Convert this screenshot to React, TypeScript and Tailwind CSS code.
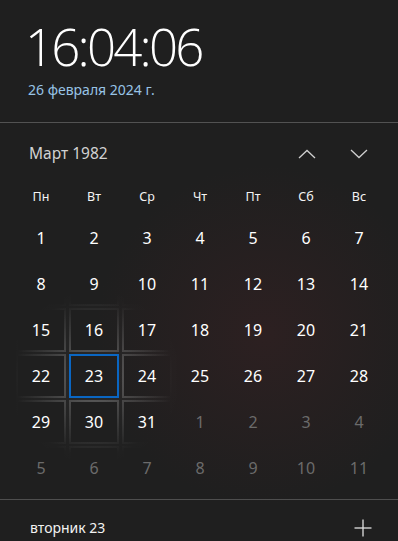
import React from "react";

const PANEL_BG =
  "bg-fixed bg-[radial-gradient(circle_at_265px_335px,rgba(58,33,35,0.5),rgba(31,31,31,0)_170px),linear-gradient(#1f1f1f,#1f1f1f)]";

const weekdays = ["Пн", "Вт", "Ср", "Чт", "Пт", "Сб", "Вс"];

type Day = { n: number; cur: boolean };

function buildDays(): Day[] {
  const d: Day[] = [];
  for (let i = 1; i <= 31; i++) d.push({ n: i, cur: true });
  for (let i = 1; i <= 11; i++) d.push({ n: i, cur: false });
  return d;
}

export default function App() {
  const days = buildDays();
  return (
    <div
      className={`w-[398px] h-[541px] overflow-hidden text-white font-['Noto_Sans',sans-serif] ${PANEL_BG}`}
    >
      {/* header */}
      <div className="h-[122px] pl-[25px] pt-[24px]">
        <div className="font-['Open_Sans',sans-serif] font-light text-[51px] leading-[44px] tracking-[-2.8px] text-white">
          16:04:06
        </div>
        <div className="mt-[12px] pl-[3px] text-[14px] leading-[20px] text-[#98c4e6]">
          26 февраля 2024 г.
        </div>
      </div>
      <div className="h-px bg-[#525252]" />

      {/* month header */}
      <div className="h-[62px] flex items-center pl-[29px] pr-[30px]">
        <div className="text-[15.5px] text-[#d2d2d2] flex-1">Март 1982</div>
        <svg width="18" height="10" viewBox="0 0 18 10" className="mr-[34px]">
          <polyline
            points="1,9 9,1.5 17,9"
            fill="none"
            stroke="#cfcfcf"
            strokeWidth="1.3"
          />
        </svg>
        <svg width="18" height="10" viewBox="0 0 18 10">
          <polyline
            points="1,1 9,8.5 17,1"
            fill="none"
            stroke="#cfcfcf"
            strokeWidth="1.3"
          />
        </svg>
      </div>

      {/* weekdays */}
      <div className="grid grid-cols-[repeat(7,50px)] gap-x-[3px] ml-[16px] h-[24px] items-center">
        {weekdays.map((w) => (
          <div key={w} className="text-center text-[12.5px] text-[#f4f4f4]">
            {w}
          </div>
        ))}
      </div>

      {/* days */}
      <div className="mt-[7px] ml-[16px] w-[368px] grid grid-cols-[repeat(7,50px)] grid-rows-[repeat(6,44px)] gap-x-[3px] gap-y-[2px] bg-[radial-gradient(circle_at_78px_161px,rgba(255,255,255,0.045),rgba(255,255,255,0)_90px)]">
        {days.map((d, i) => {
          const hovered = d.cur && d.n === 23;
          const outer = hovered
            ? "bg-[#0a66c2]"
            : "bg-fixed bg-[radial-gradient(circle_at_94px_377px,rgba(255,255,255,0.3),rgba(255,255,255,0.13)_45px,rgba(255,255,255,0)_80px)]";
          return (
            <div key={i} className={`p-[2px] ${outer}`}>
              <div
                className={`h-full flex items-center justify-center text-[16px] ${PANEL_BG} ${
                  d.cur ? "text-white" : "text-[#6b6b6b]"
                }`}
              >
                {d.n}
              </div>
            </div>
          );
        })}
      </div>

      <div className="mt-[9px] h-px bg-[#4e4e4e]" />

      {/* footer */}
      <div className="flex items-center pl-[30px] pr-[26px] h-[40px] pt-[15px]">
        <div className="flex-1 text-[14px] leading-[20px] text-[#f2f2f2]">вторник 23</div>
        <svg width="18" height="18" viewBox="0 0 18 18">
          <line x1="9" y1="0.5" x2="9" y2="17.5" stroke="#e0e0e0" strokeWidth="1.3" />
          <line x1="0.5" y1="9" x2="17.5" y2="9" stroke="#e0e0e0" strokeWidth="1.3" />
        </svg>
      </div>
    </div>
  );
}
